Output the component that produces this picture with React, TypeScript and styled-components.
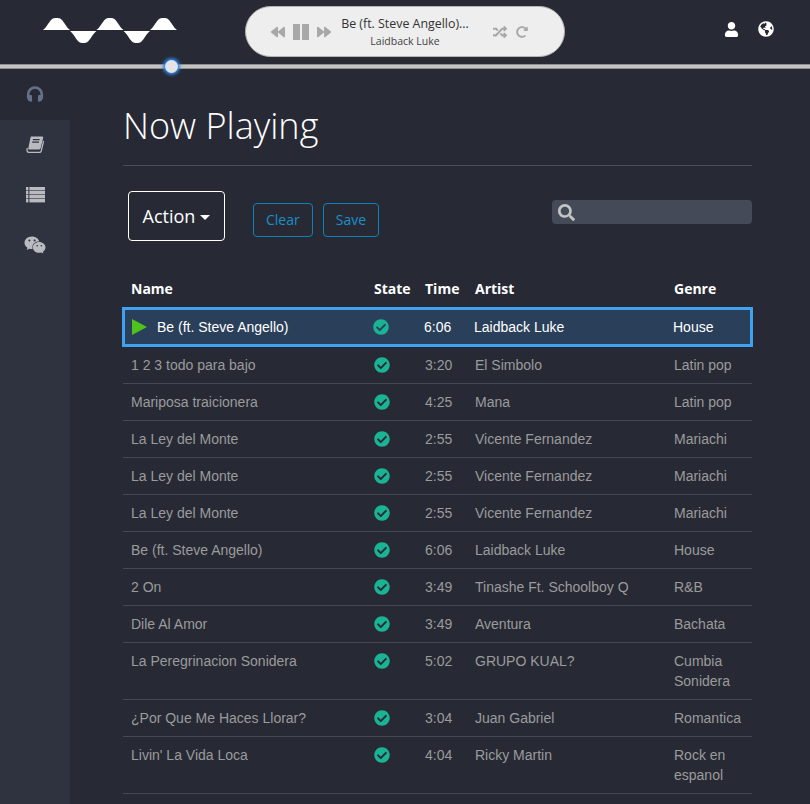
import React from "react";
import styled, { createGlobalStyle } from "styled-components";
import { FaUser, FaGlobeAmericas, FaWeixin, FaSearch, FaCheckCircle, FaRandom, FaBackward, FaForward, FaRedoAlt } from "react-icons/fa";

const GlobalStyle = createGlobalStyle`
  html, body { margin: 0; padding: 0; background: #272a35; }
  body { font-family: "Open Sans", "Liberation Sans", sans-serif; }
`;

const tracks = [
  ["1 2 3 todo para bajo", "3:20", "El Simbolo", "Latin pop"],
  ["Mariposa traicionera", "4:25", "Mana", "Latin pop"],
  ["La Ley del Monte", "2:55", "Vicente Fernandez", "Mariachi"],
  ["La Ley del Monte", "2:55", "Vicente Fernandez", "Mariachi"],
  ["La Ley del Monte", "2:55", "Vicente Fernandez", "Mariachi"],
  ["Be (ft. Steve Angello)", "6:06", "Laidback Luke", "House"],
  ["2 On", "3:49", "Tinashe Ft. Schoolboy Q", "R&B"],
  ["Dile Al Amor", "3:49", "Aventura", "Bachata"],
  ["La Peregrinacion Sonidera", "5:02", "GRUPO KUAL?", "Cumbia Sonidera"],
  ["¿Por Que Me Haces Llorar?", "3:04", "Juan Gabriel", "Romantica"],
  ["Livin' La Vida Loca", "4:04", "Ricky Martin", "Rock en espanol"],
];

const hump = "c3 -2 6 -8 8 -10 c2 -2 3.5 -2 5.5 -2 c2 0 3.5 0 5.5 2 c2 2 5 8 8 10 z";
const dip = "c3 2 6 8 8 10 c2 2 3.5 2 5.25 2 c1.75 0 3.25 0 5.25 -2 c2 -2 5 -8 8 -10 z";

function HeadphonesIcon() {
  return (
    <svg width="18" height="16" viewBox="0 0 18 16">
      <path d="M2.2 12 V8.3 a6.8 6.8 0 0 1 13.6 0 V12" fill="none" stroke="currentColor" strokeWidth="2.6" />
      <path d="M1 9 h4 a1 1 0 0 1 1 1 V15 a0.8 0.8 0 0 1 -1 0.8 Q1 15 1 11 Z" fill="currentColor" />
      <path d="M17 9 h-4 a1 1 0 0 0 -1 1 V15 a0.8 0.8 0 0 0 1 0.8 Q17 15 17 11 Z" fill="currentColor" />
    </svg>
  );
}

function BookIcon() {
  return (
    <svg width="18" height="18" viewBox="0 0 18 18">
      <path d="M5 0.5 H16 Q17.5 0.5 17.2 1.7 L14.5 12.5 Q14.2 13.6 13 13.6 H3.5 Q2 13.6 2.3 12.2 L4.5 1.5 Z" fill="currentColor" />
      <path d="M6.8 3.6 H13.6 M6.2 6.2 H13" stroke="#2f3340" strokeWidth="1.2" />
      <path d="M1.3 12 Q0.3 16.4 3 16.4 H13.5 Q14.8 16.4 15.2 15 L17.6 5" fill="none" stroke="currentColor" strokeWidth="1.3" />
    </svg>
  );
}

function ListIcon() {
  return (
    <svg width="19" height="16" viewBox="0 0 19 16" fill="currentColor">
      {[0, 4, 8, 12].map((y) => (
        <g key={y}>
          <rect x="0" y={y} width="2.4" height="3.4" />
          <rect x="3.4" y={y} width="15.6" height="3.4" />
        </g>
      ))}
    </svg>
  );
}

export default function App() {
  return (
    <Page>
      <GlobalStyle />
      <TopBar>
        <Logo viewBox="0 0 134 26" fill="#fff">
          <path d={`M0 12 ${hump}`} />
          <path d={`M53.5 12 ${hump}`} />
          <path d={`M107 12 ${hump}`} />
          <path d={`M27 13 ${dip}`} />
          <path d={`M80.5 13 ${dip}`} />
        </Logo>
        <Player>
          <Transport>
            <FaBackward size={14} />
            <PauseGlyph><PauseBar /><PauseBar /></PauseGlyph>
            <FaForward size={14} />
          </Transport>
          <TrackInfo>
            <TrackTitle>Be (ft. Steve Angello)...</TrackTitle>
            <TrackArtist>Laidback Luke</TrackArtist>
          </TrackInfo>
          <Modes>
            <FaRandom size={14} />
            <FaRedoAlt size={12} />
          </Modes>
        </Player>
        <UserIcons>
          <FaUser size={15} />
          <FaGlobeAmericas size={16} />
        </UserIcons>
      </TopBar>
      <Seek>
        <SeekKnob />
      </Seek>
      <Body>
        <Sidebar>
          <NavItem $active><HeadphonesIcon /></NavItem>
          <NavItem><BookIcon /></NavItem>
          <NavItem><ListIcon /></NavItem>
          <NavItem><FaWeixin size={22} /></NavItem>
        </Sidebar>
        <Main>
          <Title>Now Playing</Title>
          <Toolbar>
            <ActionButton>Action <Caret /></ActionButton>
            <OutlineButton>Clear</OutlineButton>
            <OutlineButton>Save</OutlineButton>
            <SearchBox><FaSearch size={17} /></SearchBox>
          </Toolbar>
          <Table>
            <thead>
              <tr>
                <Head $w={243}>Name</Head>
                <Head $w={51}>State</Head>
                <Head $w={50}>Time</Head>
                <Head $w={199}>Artist</Head>
                <Head>Genre</Head>
              </tr>
            </thead>
            <tbody>
              <ActiveRow>
                <ActiveCell><PlayMark />Be (ft. Steve Angello)</ActiveCell>
                <ActiveCell><CheckMark><FaCheckCircle size={16} /></CheckMark></ActiveCell>
                <ActiveCell>6:06</ActiveCell>
                <ActiveCell>Laidback Luke</ActiveCell>
                <ActiveCell>House</ActiveCell>
              </ActiveRow>
              {tracks.map((t, i) => (
                <tr key={i}>
                  <Cell>{t[0]}</Cell>
                  <Cell><CheckMark><FaCheckCircle size={16} /></CheckMark></Cell>
                  <Cell>{t[1]}</Cell>
                  <Cell>{t[2]}</Cell>
                  <Cell>{t[3]}</Cell>
                </tr>
              ))}
            </tbody>
          </Table>
        </Main>
      </Body>
    </Page>
  );
}

const Page = styled.div`
  width: 810px;
  height: 804px;
  overflow: hidden;
  background: #272a35;
  color: #fff;
`;

const TopBar = styled.div`
  height: 64px;
  display: flex;
  align-items: flex-start;
`;

const Logo = styled.svg`
  width: 134px;
  height: 26px;
  margin: 18px 0 0 43px;
  flex: none;
`;

const Player = styled.div`
  width: 320px;
  height: 51px;
  margin: 6px 0 0 68px;
  box-sizing: border-box;
  border: 1px solid #b4b4b4;
  border-radius: 26px;
  background: #eeeeee;
  display: flex;
  align-items: center;
  padding-left: 25px;
  flex: none;
`;

const Transport = styled.div`
  display: flex;
  align-items: center;
  gap: 8px;
  color: #a8a8a8;
  width: 70px;
`;

const PauseGlyph = styled.div`
  display: flex;
  gap: 2px;
`;

const PauseBar = styled.span`
  width: 7px;
  height: 16px;
  background: #a8a8a8;
`;

const TrackInfo = styled.div`
  width: 128px;
  text-align: center;
`;

const TrackTitle = styled.div`
  font-size: 12.4px;
  line-height: 17px;
  color: #333;
  white-space: nowrap;
`;

const TrackArtist = styled.div`
  font-size: 10.5px;
  line-height: 14px;
  margin-top: 2px;
  color: #444;
`;

const Modes = styled.div`
  display: flex;
  align-items: center;
  gap: 9px;
  color: #a8a8a8;
  margin-left: 24px;
`;

const UserIcons = styled.div`
  display: flex;
  align-items: center;
  gap: 19px;
  margin: 21px 0 0 159px;
`;

const Seek = styled.div`
  position: relative;
  height: 5px;
  box-sizing: border-box;
  background: #c4c4c4;
  border-top: 1px solid #8e8e8e;
  border-bottom: 1px solid #8e8e8e;
  margin-bottom: 1px;
`;

const SeekKnob = styled.div`
  position: absolute;
  left: 165px;
  top: -5px;
  width: 13px;
  height: 13px;
  border-radius: 50%;
  background: #e4e4e8;
  box-shadow: 0 0 3px 2px #2f83e0;
`;

const Body = styled.div`
  display: flex;
`;

const Sidebar = styled.div`
  width: 70px;
  height: 734px;
  flex: none;
  background: #2f3340;
`;

const NavItem = styled.div<{ $active?: boolean }>`
  height: 50px;
  display: flex;
  align-items: center;
  justify-content: center;
  padding-bottom: ${(p) => (p.$active ? "2px" : "0")};
  box-sizing: border-box;
  background: ${(p) => (p.$active ? "#272a35" : "transparent")};
  color: ${(p) => (p.$active ? "#667089" : "#b9bbc0")};
`;

const Main = styled.div`
  width: 629px;
  margin-left: 53px;
`;

const Title = styled.h1`
  margin: 0;
  padding: 31px 0 15px;
  font-size: 36px;
  font-weight: 300;
  line-height: 49px;
  border-bottom: 1px solid #4a4d58;
`;

const Toolbar = styled.div`
  display: flex;
  align-items: flex-start;
  padding: 25px 0 0 5px;
  height: 88px;
`;

const ActionButton = styled.div`
  width: 97px;
  height: 50px;
  box-sizing: border-box;
  margin-right: 28px;
  border: 1px solid #fff;
  border-radius: 4px;
  font-size: 18px;
  font-weight: 400;
  display: flex;
  align-items: center;
  justify-content: center;
  gap: 5px;
`;

const Caret = styled.span`
  border-top: 5px solid #fff;
  border-left: 5px solid transparent;
  border-right: 5px solid transparent;
  margin-top: 3px;
`;

const OutlineButton = styled.div`
  height: 32px;
  margin: 12px 10px 0 0;
  padding: 0 12px;
  border: 1px solid #1181b3;
  border-radius: 4px;
  color: #1a8fc8;
  font-size: 14px;
  line-height: 32px;
`;

const SearchBox = styled.div`
  width: 200px;
  height: 24px;
  margin: 9px 0 0 auto;
  border-radius: 4px;
  background: #454a59;
  color: #c4c4c4;
  display: flex;
  align-items: center;
  padding-left: 6px;
  box-sizing: border-box;
`;

const Table = styled.table`
  width: 629px;
  border-collapse: collapse;
  table-layout: fixed;
  font-family: "Liberation Sans", sans-serif;
  font-size: 14px;
`;

const Head = styled.th<{ $w?: number }>`
  width: ${(p) => (p.$w ? `${p.$w}px` : "auto")};
  box-sizing: border-box;
  padding: 0 8px 9px;
  font-family: "Open Sans", sans-serif;
  font-size: 14px;
  line-height: 20px;
  font-weight: 700;
  text-align: left;
`;

const Cell = styled.td`
  padding: 8px;
  line-height: 20px;
  color: #9b9b9b;
  border-bottom: 1px solid #454856;
  vertical-align: top;
`;

const ActiveRow = styled.tr`
  background: #2a405a;
  outline: 3px solid #3ea2ee;
  outline-offset: -2px;

  & + tr td {
    padding-top: 9px;
  }
`;

const ActiveCell = styled.td`
  padding: 9px 8px 9px 7px;
  line-height: 20px;
  color: #fff;
`;

const PlayMark = styled.span`
  display: inline-block;
  vertical-align: -3px;
  border-left: 15px solid #4fc31c;
  border-top: 8px solid transparent;
  border-bottom: 8px solid transparent;
  margin: 0 10px 0 2px;
`;

const CheckMark = styled.span`
  display: inline-flex;
  color: #1ab394;
  vertical-align: middle;
  margin-top: -2px;
`;
